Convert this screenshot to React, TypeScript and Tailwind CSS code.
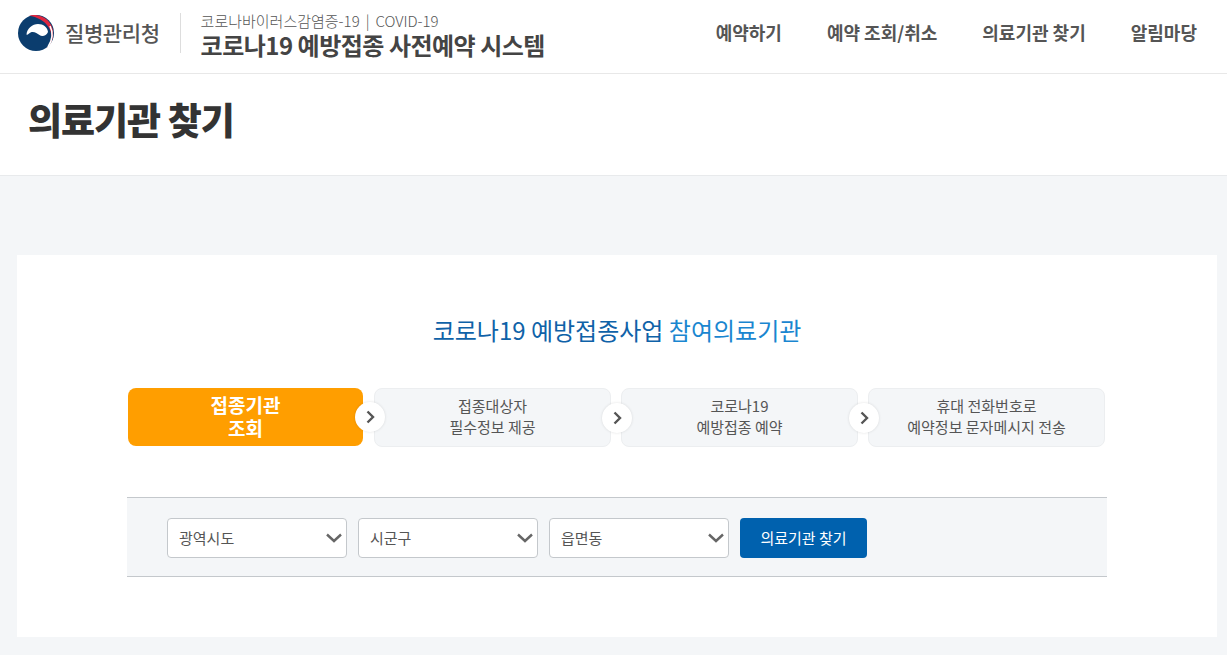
import React from "react";

const font = { fontFamily: '"Noto Sans CJK KR", "Noto Sans", sans-serif' };

function Logo() {
  return (
    <svg width="40" height="40" viewBox="0 0 40 40" className="shrink-0">
      <circle cx="19" cy="20" r="18" fill="#0b3d6e" />
      <path d="M9.500 21.500c.5-6 6-10.500 11.500-10.500s9.500 3.500 10 8c-1.500 3.800-6 5-8.500 3-2.500-2-5.500-3.800-8.500-2.800-2 1-3.500 3.300-4.500 2.300z" fill="#fff" />
      <path d="M12 2.800C18 1 27 2.600 32.500 9.500c5.500 7 5 18.500-2.500 25.500 5-6.500 5.500-14.500 1.800-20.500C27.500 7.500 20 4 12 2.800z" fill="#e0263f" />
      <path d="M33 13c3.300 6.500 2.600 14-2 21" fill="none" stroke="#fff" strokeWidth="1.600" />
    </svg>
  );
}

function Step({ active, last, lines }: { active?: boolean; last?: boolean; lines: string[] }) {
  return (
    <div
      className={
        active
          ? "relative mr-[1px] flex h-[58px] w-[235px] flex-col items-center justify-center rounded-lg bg-[#ff9e00] pb-[2px] text-[19px] leading-[23px] font-bold text-white"
          : "relative flex h-[59px] w-[237px] flex-col items-center justify-center rounded-lg border border-[#eceef0] bg-[#f4f6f8] pb-[3px] text-[15px] leading-[21px] text-[#555]"
      }
    >
      {lines.map((l) => (
        <span key={l}>{l}</span>
      ))}
      {!last && (
        <span className="absolute top-[14px] right-[-22px] z-10 flex h-[30px] w-[30px] items-center justify-center rounded-full bg-white shadow-[0_0_3px_rgba(0,0,0,0.12)]">
          <svg width="9" height="14" viewBox="0 0 9 14" fill="none" stroke="#555" strokeWidth="2.4">
            <path d="M1.500 1.500 7 7l-5.500 5.500" />
          </svg>
        </span>
      )}
    </div>
  );
}

function Select({ label }: { label: string }) {
  return (
    <div className="flex h-10 w-[180px] items-center justify-between rounded border border-[#c4c8cc] bg-white pr-[3px] pl-[11px] text-[15px] text-[#555]">
      <span>{label}</span>
      <svg width="18" height="12" viewBox="0 0 18 12" fill="none" stroke="#666" strokeWidth="2.4">
        <path d="M2 2.500 9 9l7-6.500" />
      </svg>
    </div>
  );
}

export default function App() {
  return (
    <div className="flex h-[655px] w-[1227px] flex-col overflow-hidden bg-[#f4f6f8]" style={font}>
      <header className="flex h-[74px] shrink-0 items-center border-b border-[#e8e8e8] bg-white pr-[30px] pb-[8px] pl-[17px]">
        <Logo />
        <span className="ml-[8px] text-[21px] font-medium tracking-[-0.4px] text-[#555]">질병관리청</span>
        <span className="mx-[20px] h-[40px] w-px bg-[#ddd]" />
        <div className="mt-[6px] flex flex-col">
          <span className="text-[15px] leading-[18px] font-light text-[#555]">
            코로나바이러스감염증-19<span className="mx-[6px]">|</span>COVID-19
          </span>
          <span className="text-[24px] leading-[30px] font-bold tracking-[-0.5px] text-[#444]">코로나19 예방접종 사전예약 시스템</span>
        </div>
        <nav className="ml-auto flex gap-[45px] text-[18px] font-bold text-[#555]">
          <span>예약하기</span>
          <span>예약 조회/취소</span>
          <span>의료기관 찾기</span>
          <span>알림마당</span>
        </nav>
      </header>

      <div className="flex h-[102px] shrink-0 items-center border-b border-[#e8eaec] bg-white pb-[10px] pl-[28px]">
        <h1 className="text-[37px] font-black tracking-[-1px] text-[#333]">의료기관 찾기</h1>
      </div>

      <main className="mx-[17px] mt-[79px] flex h-[382px] w-[1200px] flex-col bg-white">
        <h2 className="mt-[56px] text-center text-[24px] leading-[38px] text-[#0f62a8]">
          코로나19 예방접종사업 <span className="text-[#1a86d0]">참여의료기관</span>
        </h2>
        <div className="mt-[39px] ml-[111px] flex gap-[10px]">
          <Step active lines={["접종기관", "조회"]} />
          <Step lines={["접종대상자", "필수정보 제공"]} />
          <Step lines={["코로나19", "예방접종 예약"]} />
          <Step last lines={["휴대 전화번호로", "예약정보 문자메시지 전송"]} />
        </div>
        <div className="mt-[50px] ml-[110px] flex h-[80px] w-[980px] items-center gap-[11px] border-y border-[#c4c8cc] bg-[#f4f6f8] pt-[2px] pl-[40px]">
          <Select label="광역시도" />
          <Select label="시군구" />
          <Select label="읍면동" />
          <button className="h-10 w-[127px] rounded-sm bg-[#0061ae] text-[15px] text-white">의료기관 찾기</button>
        </div>
      </main>
    </div>
  );
}
